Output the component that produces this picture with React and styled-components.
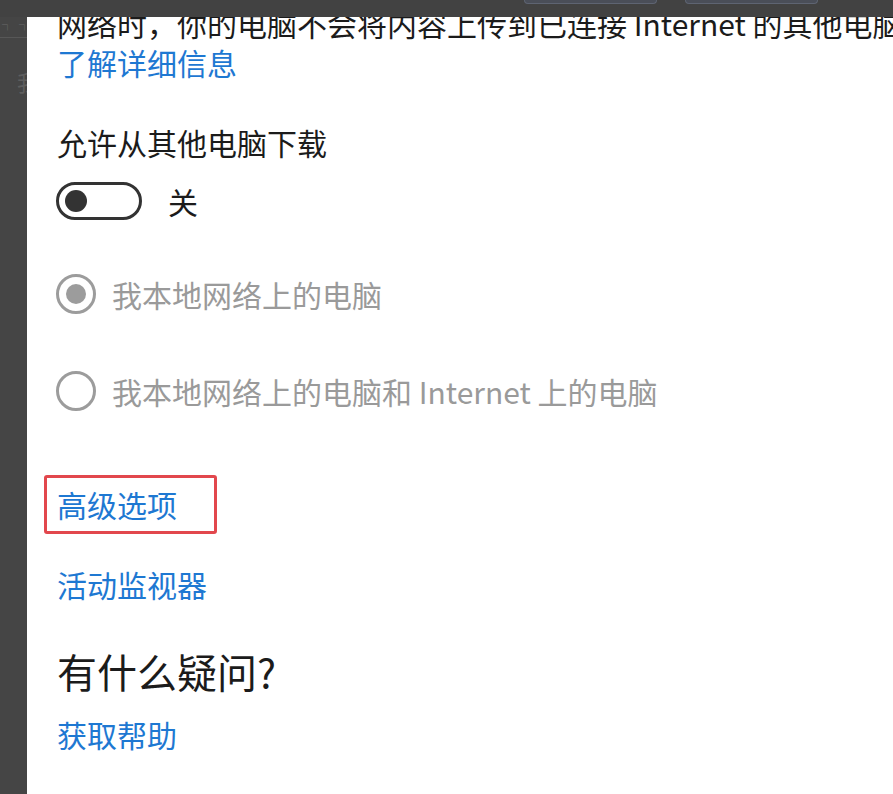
import React from 'react';
import styled, { createGlobalStyle } from 'styled-components';

const GlobalStyle = createGlobalStyle`
  html, body {
    margin: 0;
    padding: 0;
    background: #444;
  }
  body {
    font-family: "Noto Sans CJK SC", "Noto Sans", sans-serif;
  }
`;

const Screen = styled.div`
  display: grid;
  grid-template-columns: 27px 1fr;
  grid-template-rows: 17px 1fr;
  height: 100vh;
  background: #444;
  overflow: hidden;
`;

const TopBar = styled.div`
  grid-column: 1 / -1;
  display: flex;
  align-items: flex-start;
  gap: 28px;
  padding-left: 524px;
  background: #424242;
`;

const GhostButton = styled.div`
  width: 131px;
  height: 3px;
  background: #4a4e58;
  border: 1px solid #5e6472;
  border-top: none;
  border-radius: 0 0 6px 6px;
`;

const Sidebar = styled.div`
  overflow: hidden;
  background: #454545;
  white-space: nowrap;
`;

const SideHeader = styled.div`
  height: 20px;
  padding-left: 2px;
  border-bottom: 1px solid #575757;
  color: #6a6a6a;
  font-size: 11px;
  line-height: 14px;
  letter-spacing: 6px;
`;

const SideItem = styled.div`
  margin-top: 32px;
  padding-left: 17px;
  color: #5e5e5e;
  font-size: 22px;
  line-height: 22px;
`;

const Panel = styled.div`
  background: #fff;
  overflow: hidden;
  padding-left: 30px;
  display: flex;
  flex-direction: column;
  align-items: flex-start;
`;

const Line = styled.div`
  margin-top: ${(p) => p.$gap}px;
  font-size: 30px;
  line-height: 30px;
  color: ${(p) => (p.$muted ? '#9a9a9a' : '#1b1b1b')};
  white-space: nowrap;
`;

const LinkText = styled.a`
  display: block;
  margin-top: ${(p) => p.$gap || 0}px;
  font-size: 30px;
  line-height: 30px;
  color: #1e78d2;
  text-decoration: none;
  white-space: nowrap;
`;

const Question = styled.div`
  margin-top: ${(p) => p.$gap}px;
  font-size: 40px;
  line-height: 40px;
  color: #1b1b1b;
`;

const ToggleRow = styled.div`
  margin-top: ${(p) => p.$gap}px;
  display: flex;
  align-items: center;
  gap: 26px;
  margin-left: -1px;
`;

const Toggle = styled.div`
  box-sizing: border-box;
  width: 86px;
  height: 38px;
  border: 3px solid #333;
  border-radius: 19px;
  display: flex;
  align-items: center;
  padding-left: 6px;
`;

const Knob = styled.div`
  width: 22px;
  height: 22px;
  border-radius: 50%;
  background: #333;
`;

const RadioRow = styled.div`
  margin-top: ${(p) => p.$gap}px;
  display: flex;
  align-items: center;
  gap: 16px;
  margin-left: -1px;
`;

const RadioCircle = styled.div`
  box-sizing: border-box;
  width: 40px;
  height: 40px;
  border: 3px solid #9c9c9c;
  border-radius: 50%;
  display: flex;
  align-items: center;
  justify-content: center;

  &::after {
    content: '';
    display: ${(p) => (p.$checked ? 'block' : 'none')};
    width: 20px;
    height: 20px;
    border-radius: 50%;
    background: #9c9c9c;
  }
`;

const Highlight = styled.div`
  box-sizing: border-box;
  margin-top: ${(p) => p.$gap}px;
  margin-left: -13px;
  width: 173px;
  height: 59px;
  padding: 11px 0 0 10px;
  border: 3px solid #e2474d;
  border-radius: 3px;
`;

const App = () => (
  <>
    <GlobalStyle />
    <Screen>
      <TopBar>
        <GhostButton />
        <GhostButton />
      </TopBar>
      <Sidebar>
        <SideHeader>┐┐┐</SideHeader>
        <SideItem>我</SideItem>
      </Sidebar>
      <Panel>
        <Line $gap={-9}>网络时，你的电脑不会将内容上传到已连接 Internet 的其他电脑</Line>
        <LinkText href="#" $gap={9}>了解详细信息</LinkText>

        <Line $gap={50}>允许从其他电脑下载</Line>
        <ToggleRow $gap={25}>
          <Toggle>
            <Knob />
          </Toggle>
          <Line $gap={0}>关</Line>
        </ToggleRow>

        <RadioRow $gap={54}>
          <RadioCircle $checked />
          <Line $gap={0} $muted>我本地网络上的电脑</Line>
        </RadioRow>
        <RadioRow $gap={57}>
          <RadioCircle />
          <Line $gap={0} $muted>我本地网络上的电脑和 Internet 上的电脑</Line>
        </RadioRow>

        <Highlight $gap={64}>
          <LinkText href="#">高级选项</LinkText>
        </Highlight>
        <LinkText href="#" $gap={35}>活动监视器</LinkText>

        <Question $gap={52}>有什么疑问?</Question>
        <LinkText href="#" $gap={28}>获取帮助</LinkText>
      </Panel>
    </Screen>
  </>
);

export default App;
